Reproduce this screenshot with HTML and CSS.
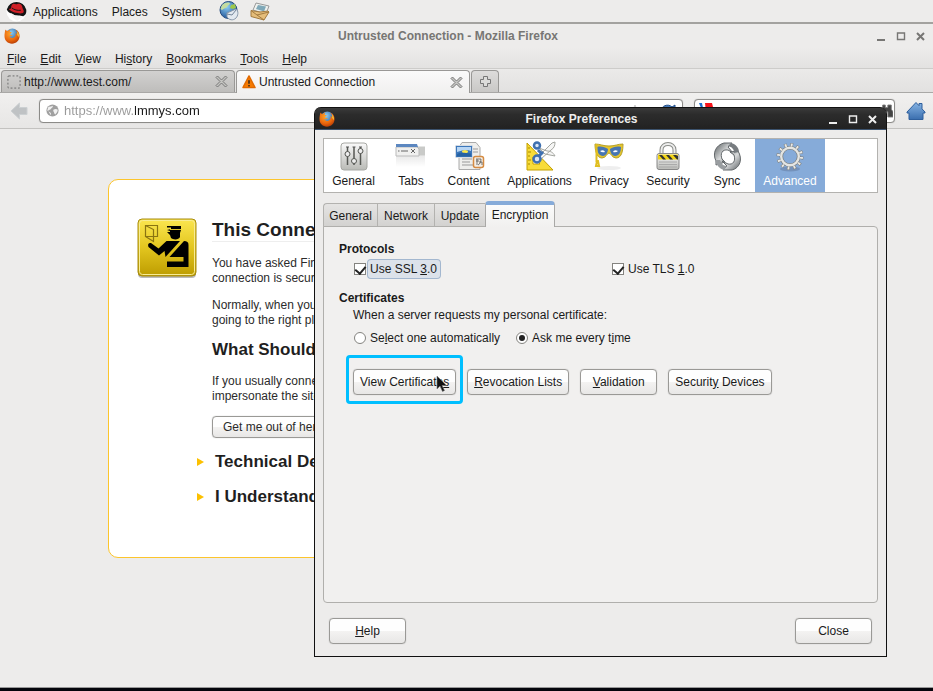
FILE: index.html
```html
<!DOCTYPE html>
<html lang="en">
<head>
<meta charset="utf-8">
<title>Untrusted Connection - Mozilla Firefox</title>
<link rel="stylesheet" href="styles.css">
</head>
<body>
<svg class="defs" width="0" height="0" aria-hidden="true">
  <defs>
    <linearGradient id="metal" x1="0" y1="0" x2="0" y2="1"><stop offset="0" stop-color="#fafafa"/><stop offset="1" stop-color="#b9bab6"/></linearGradient>
    <linearGradient id="gold" x1="0" y1="0" x2="0" y2="1"><stop offset="0" stop-color="#fbe650"/><stop offset=".5" stop-color="#e3c61f"/><stop offset="1" stop-color="#bd9c00"/></linearGradient>
    <linearGradient id="homeblue" x1="0" y1="0" x2="0" y2="1"><stop offset="0" stop-color="#86b4e4"/><stop offset="1" stop-color="#3a6eae"/></linearGradient>
    <linearGradient id="steel" x1="0" y1="0" x2="1" y2="1"><stop offset="0" stop-color="#555a5c"/><stop offset=".5" stop-color="#d8dadb"/><stop offset="1" stop-color="#5b6063"/></linearGradient>
    <linearGradient id="page" x1="0" y1="0" x2="0" y2="1"><stop offset="0" stop-color="#d0d0d0"/><stop offset="1" stop-color="#fff"/></linearGradient>
    <radialGradient id="orange" cx=".4" cy=".3" r=".8"><stop offset="0" stop-color="#ffa62b"/><stop offset=".6" stop-color="#e8640c"/><stop offset="1" stop-color="#a83204"/></radialGradient>
    <radialGradient id="sea" cx=".4" cy=".3" r=".8"><stop offset="0" stop-color="#8fd0f5"/><stop offset="1" stop-color="#12458d"/></radialGradient>
    <symbol id="firefox" viewBox="0 0 16 16">
      <circle cx="8.300" cy="7.200" r="6.600" fill="url(#sea)"/>
      <path d="M1.300 1.500C2 2.500 2.800 2.800 3.600 3c1-.9 2-1.400 3.200-1.500-.9.700-1.200 1.500-1.100 2.200.5.400 1.600.2 2.200.6-.3 1-1.600 1.100-1.700 2 .1.900 1.200 1 2.400.7-.5 1.300-2.300 1.700-3.300 1 .8 1.900 3.300 2.500 5 1.300 1.500-1.100 1.900-3 1-4.700 1.200.6 1.800 1.600 2 2.600.2-2.300-.5-4-2.200-5.600C14 2.700 15.700 5.200 15.600 8.300 15.400 12.600 12.200 15.700 8 15.700 3.800 15.700.5 12.500.5 8.300.5 6.300.8 4.200 1.300 1.500z" fill="url(#orange)"/>
      <path d="M12.900 3c1.700 1.800 2.300 4.100 1.700 6.500-.3-1.300-.7-2-1.300-2.500.3-1.400.2-2.700-.4-4z" fill="#ffd23c"/>
    </symbol>
    <symbol id="globe" viewBox="0 0 16 16">
      <circle cx="8" cy="8" r="7.500" fill="#a0a0a0"/>
      <path d="M3 3.500C5 3 7 3 8 2c1 1 0 2-1 3s-1 2-2.500 2S3 9 1.500 8M9 7c2-1 4-1 5.500 0 0 3-2 4-3 6-2-1-1-3-2.500-4zM3 9l3 2v3" fill="#f1f1f1"/>
    </symbol>
    <symbol id="cross" viewBox="0 0 13 13"><path d="M2.500 1 6.500 5l4-4L12 2.500l-4 4 4 4L10.500 12l-4-4-4 4L1 10.500l4-4-4-4z" fill="#c4c4c1" stroke="#777"/></symbol>
    <symbol id="winbtns" viewBox="0 0 50 12"><path d="M1 10h8" stroke="currentColor" stroke-width="2"/><path d="M21.500 3h7v6.500h-7zM21 3h8" fill="none" stroke="currentColor" stroke-width="1.400"/><path d="m41 3 7 7m0-7-7 7" stroke="currentColor" stroke-width="2"/></symbol>
  </defs>
</svg>

<nav class="panel" aria-label="Desktop panel">
  <svg class="hat" viewBox="0 0 22 22" aria-hidden="true"><circle cx="11" cy="11" r="10.500" fill="#fff"/><path d="M.8 9A10.500 10.500 0 0 1 21.200 9c.6 4-1 6-3.200 7-3-1.500-8 .5-11-2.500C4 13 2 12 .8 9z" fill="#151515"/><path d="M5 8c.5-2 1-4.500 2.500-5 1.500-.3 2.500 1 4 .3 2-.8 4.200-.3 5 1.500.7 1.500.8 3.300 1.800 4.700 1 2.800-.8 3.500-3 3.500-4 0-9-1-12-4C2.500 8 4 8 5 8z" fill="#d02027"/><path d="M6 7.200c2.500 2 6 3 9.500 2.500" stroke="#151515" fill="none"/><path d="M5.500 12.500c2 2.500 6 2.500 8.500 3.500l3 1-5 3.500c-3-1-6-4-6.500-8z" fill="#f3f3f3"/></svg>
  <a href="#applications">Applications</a>
  <a href="#places">Places</a>
  <a href="#system">System</a>
  <svg class="launch" viewBox="0 0 20 20" aria-hidden="true"><circle cx="9.500" cy="9" r="8.500" fill="url(#sea)" stroke="#244b7e"/><path d="M3 4c3-3 7-3 8-2-.3 2-2 2-3 4-1 1.500-3 1-5 3L1.500 8z" fill="#c4dca0"/><path d="m12 4 4-1 1 4-3 1-3-1z" fill="#9ec84a"/><path d="m8 12 9-4c3 2 2 7 0 9-3 3-7 2-9-1z" fill="#e3e9f0" stroke="#8898aa"/><path d="m8 13 5 1 4-5" fill="none" stroke="#75869a"/></svg>
  <svg class="launch mail" viewBox="0 0 20 20" aria-hidden="true"><path d="m6 2 13 3-3 8L3 9z" fill="#eef1ee" stroke="#999"/><path d="m8 4 8 1.500-2 5L6 8z" fill="#7fa8b8"/><path d="M1 9.500 10 11l8-1 1 1-5 8L1 15.500z" fill="#e5bd7a" stroke="#a37a3f"/><path d="m1 9.500 6 4.500 12-3M7 14l7 5" stroke="#a37a3f" fill="none"/></svg>
</nav>

<main class="window">
  <header class="titlebar">
    <svg class="fox" aria-hidden="true"><use href="#firefox"/></svg>
    <span class="title">Untrusted Connection - Mozilla Firefox</span>
    <svg class="winbtns" aria-hidden="true"><use href="#winbtns"/></svg>
  </header>
  <nav class="menubar" aria-label="Menu">
    <a href="#file"><u>F</u>ile</a><a href="#edit"><u>E</u>dit</a><a href="#view"><u>V</u>iew</a><a href="#history">Hi<u>s</u>tory</a><a href="#bookmarks"><u>B</u>ookmarks</a><a href="#tools"><u>T</u>ools</a><a href="#help"><u>H</u>elp</a>
  </nav>
  <div class="tabstrip">
    <div class="tab">
      <svg class="blank" viewBox="0 0 15 15" aria-hidden="true"><rect x="1" y="1" width="13" height="13" rx="1" fill="none" stroke="#666" stroke-dasharray="2 2"/></svg>
      <a class="tabname" href="#test">http://www.test.com/</a>
      <button class="plain" aria-label="Close tab"><svg class="x" aria-hidden="true"><use href="#cross"/></svg></button>
    </div>
    <div class="tab current">
      <svg class="blank" viewBox="0 0 15 15" aria-hidden="true"><path d="M7.500 1 14 13.500H1z" fill="#f57900" stroke="#e06a00" stroke-linejoin="round" stroke-width="1.500"/><path d="M7.500 5.500v4M7.500 10.800v1.600" stroke="#222" stroke-width="1.500"/></svg>
      <a class="tabname" href="#untrusted">Untrusted Connection</a>
      <button class="plain" aria-label="Close tab"><svg class="x" aria-hidden="true"><use href="#cross"/></svg></button>
    </div>
    <button class="newtab" aria-label="New tab"><svg viewBox="0 0 13 13" width="13" height="13" aria-hidden="true"><path d="M4.500 1.500h4v3h3v4h-3v3h-4v-3h-3v-4h3z" fill="#dcdcda" stroke="#777"/></svg></button>
  </div>
  <div class="navbar">
    <button class="plain" aria-label="Back"><svg viewBox="0 0 18 18" width="18" height="18" aria-hidden="true"><path d="M1 9 9.500 1v4.500H17v7H9.500V17z" fill="#bfc2c4" stroke="#ccd0d2"/></svg></button>
    <div class="field url">
      <svg class="globe" aria-hidden="true"><use href="#globe"/></svg>
      <input type="text" value="https://www.lmmys.com" aria-label="Location">
      <svg class="star" viewBox="0 0 16 16" aria-hidden="true"><path d="m8 2 2 5h5l-4 3.500 1.500 5L8 12.500l-4.500 3 1.500-5L1 7h5z" fill="#fff" stroke="#c8c8c8"/></svg>
      <svg class="reload" viewBox="0 0 16 16" aria-hidden="true"><path d="M1 8c0-5 7-8 11-4l3-2v7H8l2-2.500C7 4 5 5 4 9z" fill="#4579b8" stroke="#234f8a"/></svg>
    </div>
    <div class="field search">
      <svg class="engine" viewBox="0 0 16 16" aria-hidden="true"><path d="M1 0h3l1 5H3z" fill="#1a6fd0"/><path d="M7 0h7l1 4-2 5H8z" fill="#f5121a"/></svg>
      <input type="text" aria-label="Search">
      <svg class="binoc" viewBox="0 0 14 16" aria-hidden="true"><path d="M2 1h3v3h3V1h4v5l2 3v6H8V9H6v5H0V8l2-3z" fill="#444" stroke="#777"/></svg>
    </div>
    <button class="plain" aria-label="Home"><svg viewBox="0 0 20 20" width="20" height="20" aria-hidden="true"><path d="M1 11 10 1.500 13 4.700V2.500h3v5.400l3 3.100v1h-2v6.500H3V12H1z" fill="url(#homeblue)" stroke="#2f5f9c"/></svg></button>
  </div>

  <section class="content">
    <article class="card">
      <svg class="badge" viewBox="0 0 60 60" aria-hidden="true">
        <rect x="1" y="2" width="58" height="58" rx="4" fill="#bbb"/>
        <rect x="1" y="1" width="58" height="57" rx="4" fill="url(#gold)" stroke="#a68b10"/>
        <rect x="2.500" y="2.500" width="55" height="54" rx="3" fill="none" stroke="#f8ec94"/>
        <path d="M8.500 7.500h12v11h-12zM8.500 7.500l8 4v12l-8-5" fill="none" stroke="#8a7411" stroke-width="1.200"/>
        <path d="M30 8h14v4l-1 3v4c-1 3-7 3-9 1l-1-3-3-3h3v-1l-3-1 4-1V9.500h-4z" fill="#000"/>
        <path d="M33 11.500h11" stroke="#dbc02a"/>
        <path d="M14 25l7.500 5.500 8-7.500H43L28.500 39l-1-6-5.500 4.500L11.500 29c-1-3 0-4 2.500-4z" fill="#000"/>
        <path d="M47 23c3 0 4.500 1 4.500 4v22H30v-5.500h16.500V39H32.500z" fill="#000"/>
      </svg>
      <div class="message">
        <h1>This Connection</h1>
        <p>You have asked Firefox<br>connection is secure.</p>
        <p>Normally, when you try<br>going to the right place.</p>
        <h2>What Should I Do?</h2>
        <p>If you usually connect<br>impersonate the site</p>
        <button class="button leave">Get me out of here!</button>
        <h2 class="expander">Technical Details</h2>
        <h2 class="expander">I Understand</h2>
      </div>
    </article>
  </section>
</main>

<section class="dialog" role="dialog" aria-labelledby="prefs-title">
  <header class="dialogbar">
    <svg class="fox" aria-hidden="true"><use href="#firefox"/></svg>
    <span class="title" id="prefs-title">Firefox Preferences</span>
    <svg class="winbtns" aria-hidden="true"><use href="#winbtns"/></svg>
  </header>
  <div class="dialogbody">
    <div class="categories">
      <button class="category"><svg viewBox="0 0 32 32" aria-hidden="true"><rect x="3" y="2" width="26" height="27" rx="3" fill="url(#metal)" stroke="#a7a8a4"/><path d="M9.500 6v18M16 6v18M22.500 6v18" stroke="#555753" stroke-width="1.500"/><path d="M8 6h3M14.500 6h3M21 6h3" stroke="#555"/><circle cx="9.500" cy="13" r="2.500" fill="#eee" stroke="#555753"/><circle cx="16" cy="20" r="2.500" fill="#eee" stroke="#555753"/><circle cx="22.500" cy="10" r="2.500" fill="#eee" stroke="#555753"/></svg>General</button>
      <button class="category"><svg viewBox="0 0 32 32" aria-hidden="true"><path d="M1 5.500h29v9H1z" fill="#c9cac8"/><path d="M1 14h29v12H1z" fill="url(#page)" opacity=".5"/><path d="M1 6h21l2 2v7H1z" fill="#f0f0ef" stroke="#bbb"/><path d="M1 3h21l1 3H1z" fill="#5c87c0"/><path d="M3 10h1.500M6 10h7" stroke="#666"/><path d="m16 8 4 4m0-4-4 4" stroke="#666"/></svg>Tabs</button>
      <button class="category"><svg viewBox="0 0 32 32" aria-hidden="true"><path d="M9 1.500h14l4 5v22H6V6z" fill="#eeeeec" stroke="#aaa"/><path d="M9 18h10M9 21h8M9 24h12M19 8h6M19 11h6" stroke="#999"/><rect x="2.500" y="4.500" width="17" height="12" rx="1" fill="#3b76ba" stroke="#d7dde4"/><path d="M4 6h14v4c-4-2-8-1-14 1z" fill="#b8d6f4"/><ellipse cx="12" cy="10.500" rx="3" ry="1.500" fill="#fce94f"/><path d="M4 15.500v-2c4-3 8-1 14-1v3z" fill="#2662a3"/><rect x="20.500" y="15.500" width="10" height="11" rx="2" fill="#f5eee5" stroke="#d58b42" stroke-width="1.500"/><path d="M23 18h5M23 20h3M24 18v6M28 18c0 3-1 5-3 6M26 21h3v3" fill="none" stroke="#555" stroke-width=".8"/></svg>Content</button>
      <button class="category"><svg viewBox="0 0 32 32" aria-hidden="true"><path d="m3 2 26 27H3zm6 14v7h7z" fill="#f8dc39" stroke="#c4a000" fill-rule="evenodd"/><path d="M4 7h2M4 11h3M4 15h2M4 19h3M4 23h2" stroke="#a88900"/><path d="m14 16 14-14 3-1c0 4-1 6-4 8L17 18zM15 7l6 6 10 2c-2-4-5-5-8-5z" fill="#f6f6f5" stroke="#a4a6a0"/><circle cx="13" cy="4.500" r="3" fill="#dbe7f7" stroke="#3f70b0" stroke-width="2.500"/><circle cx="13" cy="18" r="3.500" fill="#dbe7f7" stroke="#3f70b0" stroke-width="2.500"/><path d="m14 9 4 4m-3 2 4-4" stroke="#3f70b0" stroke-width="3"/></svg>Applications</button>
      <button class="category"><svg viewBox="0 0 32 32" aria-hidden="true"><ellipse cx="16" cy="27" rx="12" ry="2" fill="#eee"/><path d="M2 3c5 0 8 2 14 2s9-2 14-2c0 6-1 14-7 14-4 0-5-5-7-5s-3 5-7 5C3 17 2 8 2 3z" fill="#e5c52c" stroke="#b6a02a"/><path d="M4 6c4-1 8 0 11 2 0 3-2 7-5 7-4 0-6-4-6-9zM28 6c-4-1-8 0-11 2 0 3 2 7 5 7 4 0 6-4 6-9z" fill="#4775b2"/><path d="M7 10q4-2 5 1-3 1-5-1zM25 10q-4-2-5 1 3 1 5-1z" fill="#fff"/><path d="M3.500 3v18M4 20l-1 5h3l-1-5z" stroke="#e0be20" stroke-width="2" fill="none"/></svg>Privacy</button>
      <button class="category"><svg viewBox="0 0 32 32" aria-hidden="true"><path d="M9.500 14V9c0-8 13-8 13 0v5" fill="none" stroke="#8b8d89" stroke-width="4"/><path d="M9.500 14V9c0-8 13-8 13 0v5" fill="none" stroke="#eee" stroke-width="2"/><rect x="5" y="12.500" width="22" height="16" rx="2" fill="url(#metal)" stroke="#888"/><path d="M6 13.500h20v5H6z" fill="#f2d414"/><path d="m7 14 4 4.500h3L10 14zm7 0 4 4.500h3L17 14zm7 0 4 4.500h1V15l-2-1z" fill="#333"/><path d="M7 21h18M7 23.500h18M7 26h18" stroke="#aaa"/></svg>Security</button>
      <button class="category"><svg viewBox="0 0 32 32" aria-hidden="true"><path d="M5 20C1 12 5 4 13 2h8l-4 4 5 6-5-3c-6-1-8 4-6 9l3 3-9 3z" fill="url(#steel)" stroke="#62676a"/><path d="M27 10c5 8 2 17-6 19h-9l4-4-5-5 6 3c5 1 8-3 6-9l-4-3z" fill="url(#steel)" stroke="#62676a"/><path d="M20 2c5 1 8 5 8 9l-5 1c0-4-2-6-6-7z" fill="#777c80"/><path d="M4 19c1 5 5 9 9 10l3-4c-4 0-6-3-7-6z" fill="#999da0"/></svg>Sync</button>
      <button class="category selected"><svg viewBox="0 0 32 32" aria-hidden="true"><ellipse cx="16" cy="28" rx="10" ry="2.500" fill="#7492bb"/><g fill="none"><circle cx="16" cy="15.500" r="11.500" stroke="#80807c" stroke-width="4" stroke-dasharray="2.800 3.221"/><circle cx="16" cy="15.500" r="8.700" stroke="#777a77" stroke-width="3.600"/><circle cx="16" cy="15.500" r="11.500" stroke="#e9e9e7" stroke-width="3" stroke-dasharray="1.800 4.221" stroke-dashoffset="-.5"/><circle cx="16" cy="15.500" r="8.800" stroke="#e4e5e3" stroke-width="2.400"/></g></svg>Advanced</button>
    </div>
    <div class="subtabs" role="tablist">
      <button role="tab">General</button><button role="tab">Network</button><button role="tab">Update</button><button role="tab" class="active" aria-selected="true">Encryption</button>
    </div>
    <div class="pane">
      <h3>Protocols</h3>
      <div class="protocols">
        <div class="option"><input type="checkbox" id="ssl" checked><label class="focused" for="ssl">Use SSL <u>3</u>.0</label></div>
        <div class="option"><input type="checkbox" id="tls" checked><label for="tls">Use TLS <u>1</u>.0</label></div>
      </div>
      <h3>Certificates</h3>
      <p class="hint">When a server requests my personal certificate:</p>
      <div class="choices">
        <div class="option"><input type="radio" name="cert" id="auto"><label for="auto">Se<u>l</u>ect one automatically</label></div>
        <div class="option"><input type="radio" name="cert" id="ask" checked><label for="ask">Ask me every t<u>i</u>me</label></div>
      </div>
      <div class="actions">
        <div class="marked">
          <button class="button">View Certificate<u>s</u></button>
          <svg class="pointer" viewBox="0 0 12 18" aria-hidden="true"><path d="M1 1v13l3-3 2.500 5.500 2-1L6 10.500h4.500z" fill="#111" stroke="#777" stroke-width=".6"/></svg>
        </div>
        <button class="button"><u>R</u>evocation Lists</button>
        <button class="button"><u>V</u>alidation</button>
        <button class="button">Securit<u>y</u> Devices</button>
      </div>
    </div>
    <footer class="dialogfoot">
      <button class="button"><u>H</u>elp</button>
      <button class="button">Close</button>
    </footer>
  </div>
</section>
</body>
</html>
```
FILE: styles.css
```css
* { box-sizing: border-box; }
body {
  margin: 0;
  min-height: 100vh;
  display: flex;
  flex-direction: column;
  position: relative;
  overflow: hidden;
  background: #edeceb;
  color: #1a1a1a;
  font: 12px/16px "Liberation Sans", Arial, sans-serif;
  border-bottom: 3px solid #05050c;
}
a { color: inherit; text-decoration: none; }
button, input { font: inherit; color: inherit; margin: 0; }
h1, h2, h3, p { margin: 0; }
svg { display: block; flex: none; }
.defs { position: absolute; }
.plain { border: 0; padding: 0; background: none; }
u { text-underline-offset: 1px; }

.panel {
  display: flex;
  align-items: center;
  height: 24px;
  padding-left: 6px;
  gap: 14px;
  border-bottom: 2px solid #a3a29f;
}
.panel a { padding-top: 1px; }
.hat { width: 21px; height: 21px; margin-right: -8px; }
.launch { width: 20px; height: 20px; margin-left: 3px; }
.mail { margin-left: -3px; }

.window { flex: 1; display: flex; flex-direction: column; border-bottom: 1px solid #999; }
.titlebar {
  display: flex;
  align-items: center;
  height: 24px;
  padding: 0 7px 0 4px;
  color: #777674;
}
.fox { width: 16px; height: 16px; }
.title { flex: 1; text-align: center; font-weight: bold; }
.winbtns { width: 50px; height: 12px; }
.menubar {
  display: flex;
  align-items: center;
  gap: 14px;
  height: 21px;
  padding: 1px 0 0 7px;
  background: linear-gradient(#edeceb, #e3e2e1);
  border-bottom: 1px solid #cdccca;
}
.tabstrip {
  display: flex;
  align-items: flex-end;
  height: 24px;
  padding: 0 1px;
  gap: 1px;
  background: linear-gradient(#ebeae9, #e2e1e0);
  border-bottom: 1px solid #a9a8a6;
}
.tab {
  display: flex;
  align-items: center;
  flex: 0 1 234px;
  height: 22px;
  padding: 0 6px 0 5px;
  gap: 3px;
  border: 1px solid #999896;
  border-bottom: 0;
  border-radius: 4px 4px 0 0;
  background: linear-gradient(#d2d1d0, #bebdbb);
}
.tab.current {
  height: 23px;
  margin-bottom: -1px;
  background: linear-gradient(#fafafa, #f1f0ef);
}
.blank { width: 14px; height: 14px; }
.tabname { flex: 1; }
.x { width: 13px; height: 13px; }
.newtab {
  display: grid;
  place-items: center;
  width: 28px;
  height: 22px;
  padding: 0;
  border: 1px solid #999896;
  border-bottom: 0;
  border-radius: 4px 4px 0 0;
  background: linear-gradient(#dddcdb, #c9c8c6);
}
.navbar {
  display: flex;
  align-items: center;
  height: 36px;
  padding: 0 7px 0 10px;
  gap: 11px;
  background: linear-gradient(#f1f0ef, #e7e6e5);
  border-bottom: 1px solid #c3c2c0;
}
.field {
  display: flex;
  align-items: center;
  height: 24px;
  padding: 0 6px;
  gap: 5px;
  border: 1px solid #8c8b88;
  border-radius: 4px;
  box-shadow: 0 0 1px #aaa;
  background: #fff;
}
.url { flex: 1; }
.search { width: 201px; padding: 0 1px 0 3px; }
.field input {
  flex: 1;
  min-width: 0;
  padding: 0;
  border: 0;
  outline: 0;
  background: none;
}
.url input {
  font-size: 13px;
  background: linear-gradient(90deg, #999 71px, #1a1a1a 71px) text;
  -webkit-text-fill-color: transparent;
}
.globe { width: 13px; height: 13px; }
.star, .reload, .engine { width: 16px; height: 16px; }
.star { margin-right: 12px; }
.binoc { width: 12px; height: 16px; }

.content { flex: 1; padding: 50px 108px; }
.card {
  display: flex;
  gap: 15px;
  padding: 38px 28px 35px;
  border: 1px solid #fcc52c;
  border-radius: 10px;
  background: #fff;
}
.badge { width: 60px; height: 60px; }
.message { flex: 1; white-space: nowrap; min-width: 0; line-height: 15px; color: #2b2b2b; }
h1 {
  margin-bottom: 14px;
  border-bottom: 1px solid #eee;
  font-size: 19px;
  line-height: 23px;
  color: #1f1f1f;
}
.message p { margin-bottom: 12px; }
h2 { font-size: 17px; line-height: 20px; margin-bottom: 14px; color: #1f1f1f; }
.button {
  min-width: 77px;
  height: 26px;
  padding: 0 6px;
  border: 1px solid #9a9996;
  border-radius: 4px;
  background: linear-gradient(#fefefe 50%, #f4f3f2 50%, #e8e7e6);
  box-shadow: 0 0 1px #aaa;
  white-space: nowrap;
}
.leave { display: block; height: 22px; padding: 0 10px; margin-bottom: 14px; }
.expander {
  display: flex;
  align-items: center;
  gap: 11px;
  margin: 0 0 15px -15px;
}
.expander::before {
  content: "";
  border: solid transparent;
  border-width: 4px 0 4px 7px;
  border-left-color: #fcc000;
}

.dialog {
  position: absolute;
  top: 107px;
  right: 46px;
  bottom: 31px;
  left: 314px;
  display: flex;
  flex-direction: column;
  border: 1px solid #111;
  border-top: 0;
  border-radius: 7px 7px 0 0;
  background: #edeceb;
}
.dialogbar {
  display: flex;
  align-items: center;
  height: 23px;
  padding: 0 8px 0 4px;
  border-top: 1px solid #111;
  border-bottom: 1px solid #3c536e;
  border-radius: 6px 6px 0 0;
  background: linear-gradient(#3a3a3a, #2c2c2c 30%, #222);
  color: #eee;
}
.dialogbody { flex: 1; display: flex; flex-direction: column; padding: 8px 8px 12px; }
.categories {
  display: grid;
  grid-template-columns: 59px 56px 59px 83px 56px 62px 56px 70px;
  height: 55px;
  border: 1px solid #b3b2af;
  background: #fff;
}
.category {
  display: flex;
  flex-direction: column;
  align-items: center;
  padding: 2px 0 0;
  border: 0;
  background: none;
}
.category svg { width: 32px; height: 32px; }
.category.selected { background: #86abd9; color: #fff; }
.subtabs {
  display: grid;
  grid-template-columns: 54px 57px 51px 70px;
  align-items: end;
  height: 26px;
  margin: 8px 0 -1px;
}
.subtabs button {
  height: 24px;
  padding: 1px 0 0;
  border: 1px solid #b3b2af;
  border-right: 0;
  background: linear-gradient(#e5e4e3, #d3d2d0);
}
.subtabs button:first-child { border-radius: 4px 0 0; }
.subtabs .active {
  height: 26px;
  border: 1px solid #a9a8a6;
  border-top: 4px solid #86abd9;
  border-bottom: 0;
  border-radius: 4px 4px 0 0;
  background: linear-gradient(#fbfbfb, #f1f0ef);
  padding: 0 0 2px;
  z-index: 1;
}
.pane {
  flex: 1;
  padding: 14px 15px;
  border: 1px solid #b0afac;
  border-radius: 0 4px 4px;
  background: #f1f0ef;
}
h3 { font-size: 12px; line-height: 16px; }
.protocols { display: grid; grid-template-columns: 1fr 1fr; gap: 8px; margin: 2px 0 11px 15px; }
.option { display: flex; align-items: center; gap: 2px; height: 20px; }
.option label { padding: 0 2px; line-height: 18px; }
.option .focused {
  padding: 0 3px 0 2px;
  border-radius: 3px;
  background: #dce2ea;
  box-shadow: 0 0 0 1px #a3b7cf;
}
.option input {
  appearance: none;
  display: grid;
  place-items: center;
  width: 12px;
  height: 12px;
  border: 1px solid #84837f;
  background: #fff;
}
.option input[type="radio"] { border-radius: 50%; }
.option input[type="radio"]:checked::after {
  content: "";
  width: 6px;
  height: 6px;
  border-radius: 50%;
  background: #222;
}
.option input[type="checkbox"]:checked::after {
  content: "";
  width: 5px;
  height: 8px;
  margin-bottom: 2px;
  border: solid #222;
  border-width: 0 2px 2px 0;
  transform: rotate(40deg);
}
.hint { margin: 1px 0 5px 14px; }
.choices { display: flex; gap: 14px; margin: 0 0 21px 15px; }
.actions { display: flex; gap: 11px; margin-left: 14px; }
.marked { position: relative; }
.marked::after {
  content: "";
  position: absolute;
  inset: -14px -7px -9px;
  border: 3px solid #00bfff;
  border-radius: 4px;
}
.pointer { position: absolute; left: 83px; top: 6px; width: 12px; height: 18px; }
.dialogfoot { display: flex; justify-content: space-between; padding: 15px 6px 0; }
```
